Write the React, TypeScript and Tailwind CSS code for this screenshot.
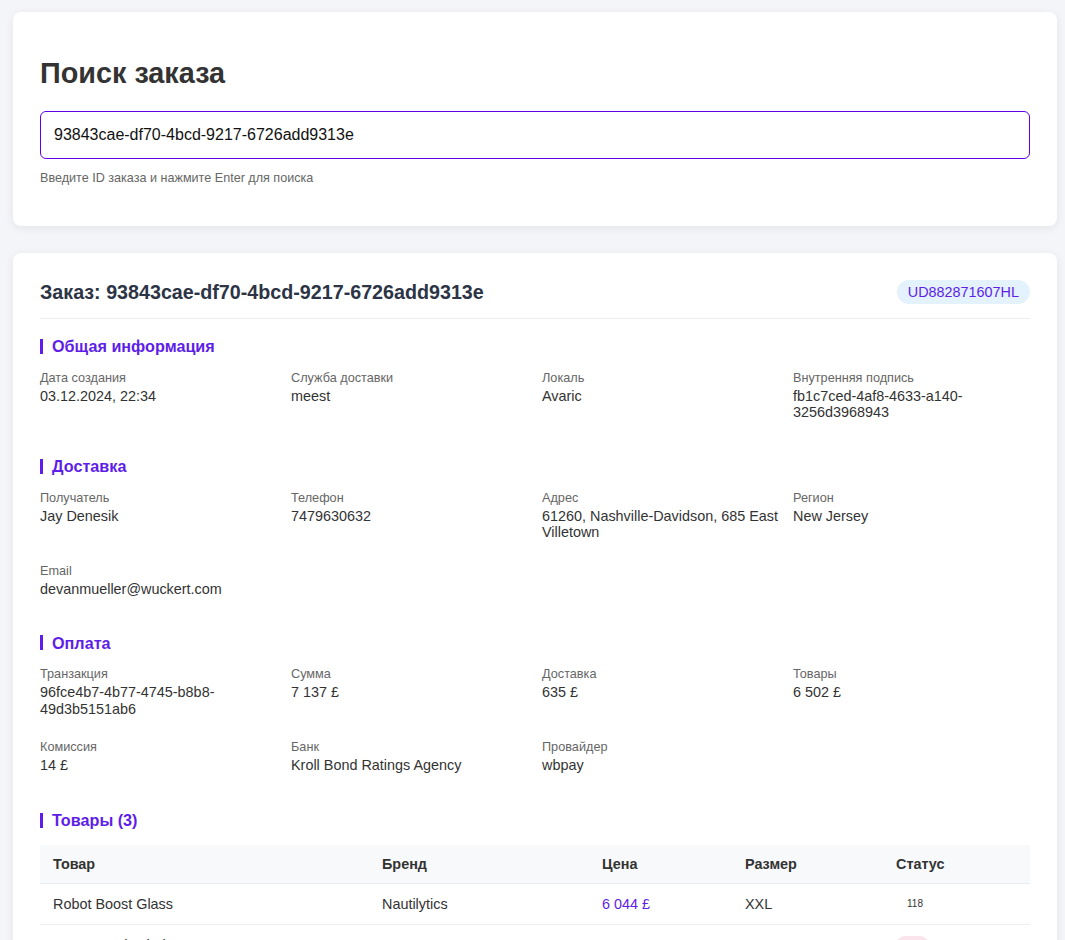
import React from "react";

const accent = "text-[#5e1ee8]";

const sections = [
  {
    title: "Общая информация",
    fields: [
      { label: "Дата создания", value: "03.12.2024, 22:34" },
      { label: "Служба доставки", value: "meest" },
      { label: "Локаль", value: "Avaric" },
      { label: "Внутренняя подпись", value: "fb1c7ced-4af8-4633-a140-3256d3968943" },
    ],
  },
  {
    title: "Доставка",
    fields: [
      { label: "Получатель", value: "Jay Denesik" },
      { label: "Телефон", value: "7479630632" },
      { label: "Адрес", value: "61260, Nashville-Davidson, 685 East Villetown" },
      { label: "Регион", value: "New Jersey" },
      { label: "Email", value: "devanmueller@wuckert.com" },
    ],
  },
  {
    title: "Оплата",
    fields: [
      { label: "Транзакция", value: "96fce4b7-4b77-4745-b8b8-49d3b5151ab6" },
      { label: "Сумма", value: "7 137 £" },
      { label: "Доставка", value: "635 £" },
      { label: "Товары", value: "6 502 £" },
      { label: "Комиссия", value: "14 £" },
      { label: "Банк", value: "Kroll Bond Ratings Agency" },
      { label: "Провайдер", value: "wbpay" },
    ],
  },
];

const items = [
  { name: "Robot Boost Glass", brand: "Nautilytics", price: "6 044 £", size: "XXL", status: "118", tone: "" },
  { name: "Smart Fresh Chair", brand: "Quotezart", price: "312 £", size: "M", status: "42", tone: "bg-[#fce4ec] text-[#c2185b]" },
  { name: "Ultra Soft Lamp", brand: "Brightcore", price: "146 £", size: "S", status: "7", tone: "bg-[#e8f5e9] text-[#2e7d32]" },
];

function SectionTitle({ children }: { children: React.ReactNode }) {
  return (
    <h3 className={`flex items-center gap-[9px] text-[16.2px] leading-[18px] font-bold ${accent} mb-[15.5px]`}>
      <span className="w-[3px] h-[15px] bg-[#5e1ee8]" />
      {children}
    </h3>
  );
}

export default function App() {
  return (
    <div
      className="min-h-screen bg-[#f4f5f9] pt-3 pl-[13px] pr-[8px] pb-10 text-[#333]"
      style={{ fontFamily: '"Liberation Sans", Arial, sans-serif' }}
    >
      {/* Search card */}
      <div className="bg-white rounded-lg shadow-[0_2px_10px_rgba(0,0,0,0.07)] px-[27px] pt-[45px] pb-[41px]">
        <h1 className="text-[28.8px] leading-[32px] font-bold text-[#333] mb-[22px]">Поиск заказа</h1>
        <input
          readOnly
          value="93843cae-df70-4bcd-9217-6726add9313e"
          className="w-full h-[48px] rounded-md border border-[#6200ea] px-[13px] text-base text-[#111] outline-none"
        />
        <p className="mt-[12px] text-[12.6px] leading-[14px] text-[#666]">Введите ID заказа и нажмите Enter для поиска</p>
      </div>

      {/* Order card */}
      <div className="mt-[27px] bg-white rounded-lg shadow-[0_2px_10px_rgba(0,0,0,0.07)] p-[27px]">
        <div className="flex items-center justify-between pb-[14px] border-b border-[#eeeeee]">
          <h2 className="text-[19.7px] leading-[23px] font-bold text-[#2c3445]">
            Заказ: 93843cae-df70-4bcd-9217-6726add9313e
          </h2>
          <span className={`rounded-full bg-[#e3f2fd] px-[11px] py-1 text-[14.4px] leading-4 ${accent}`}>UD882871607HL</span>
        </div>

        {sections.map((section, i) => (
          <div key={section.title} className={i === 0 ? "mt-[18px]" : "mt-[36.5px]"}>
            <SectionTitle>{section.title}</SectionTitle>
            <div className="grid grid-cols-4 gap-x-[14px] gap-y-[23px]">
              {section.fields.map((f) => (
                <div key={f.label}>
                  <div className="text-[12.7px] leading-[15px] text-[#666] mb-[2px]">{f.label}</div>
                  <div className="text-[14.4px] leading-[16.5px] text-[#333] break-words">{f.value}</div>
                </div>
              ))}
            </div>
          </div>
        ))}

        <div className="mt-[37.5px]">
          <SectionTitle>Товары (3)</SectionTitle>
          <table className="w-full table-fixed text-[14.4px] text-left border-collapse">
            <thead>
              <tr className="bg-[#f8f9fa] border-b border-[#e9ecef]">
                <th className="w-[329px] px-[13px] py-[11px] leading-4 font-bold">Товар</th>
                <th className="w-[220px] px-[13px] py-[11px] leading-4 font-bold">Бренд</th>
                <th className="w-[143px] px-[13px] py-[11px] leading-4 font-bold">Цена</th>
                <th className="w-[151px] px-[13px] py-[11px] leading-4 font-bold">Размер</th>
                <th className="px-[13px] py-[11px] leading-4 font-bold">Статус</th>
              </tr>
            </thead>
            <tbody>
              {items.map((it) => (
                <tr key={it.name} className="border-b border-[#eeeeee]">
                  <td className="px-[13px] py-3 leading-4">{it.name}</td>
                  <td className="px-[13px] py-3 leading-4">{it.brand}</td>
                  <td className={`px-[13px] py-3 leading-4 ${accent}`}>{it.price}</td>
                  <td className="px-[13px] py-3 leading-4">{it.size}</td>
                  <td className="px-[13px] py-3 leading-4">
                    <div className="flex h-4 items-center">
                      <span className={`rounded-full px-[11px] py-[2px] text-[10px] leading-[14px] ${it.tone}`}>
                        {it.status}
                      </span>
                    </div>
                  </td>
                </tr>
              ))}
            </tbody>
          </table>
        </div>
      </div>
    </div>
  );
}
